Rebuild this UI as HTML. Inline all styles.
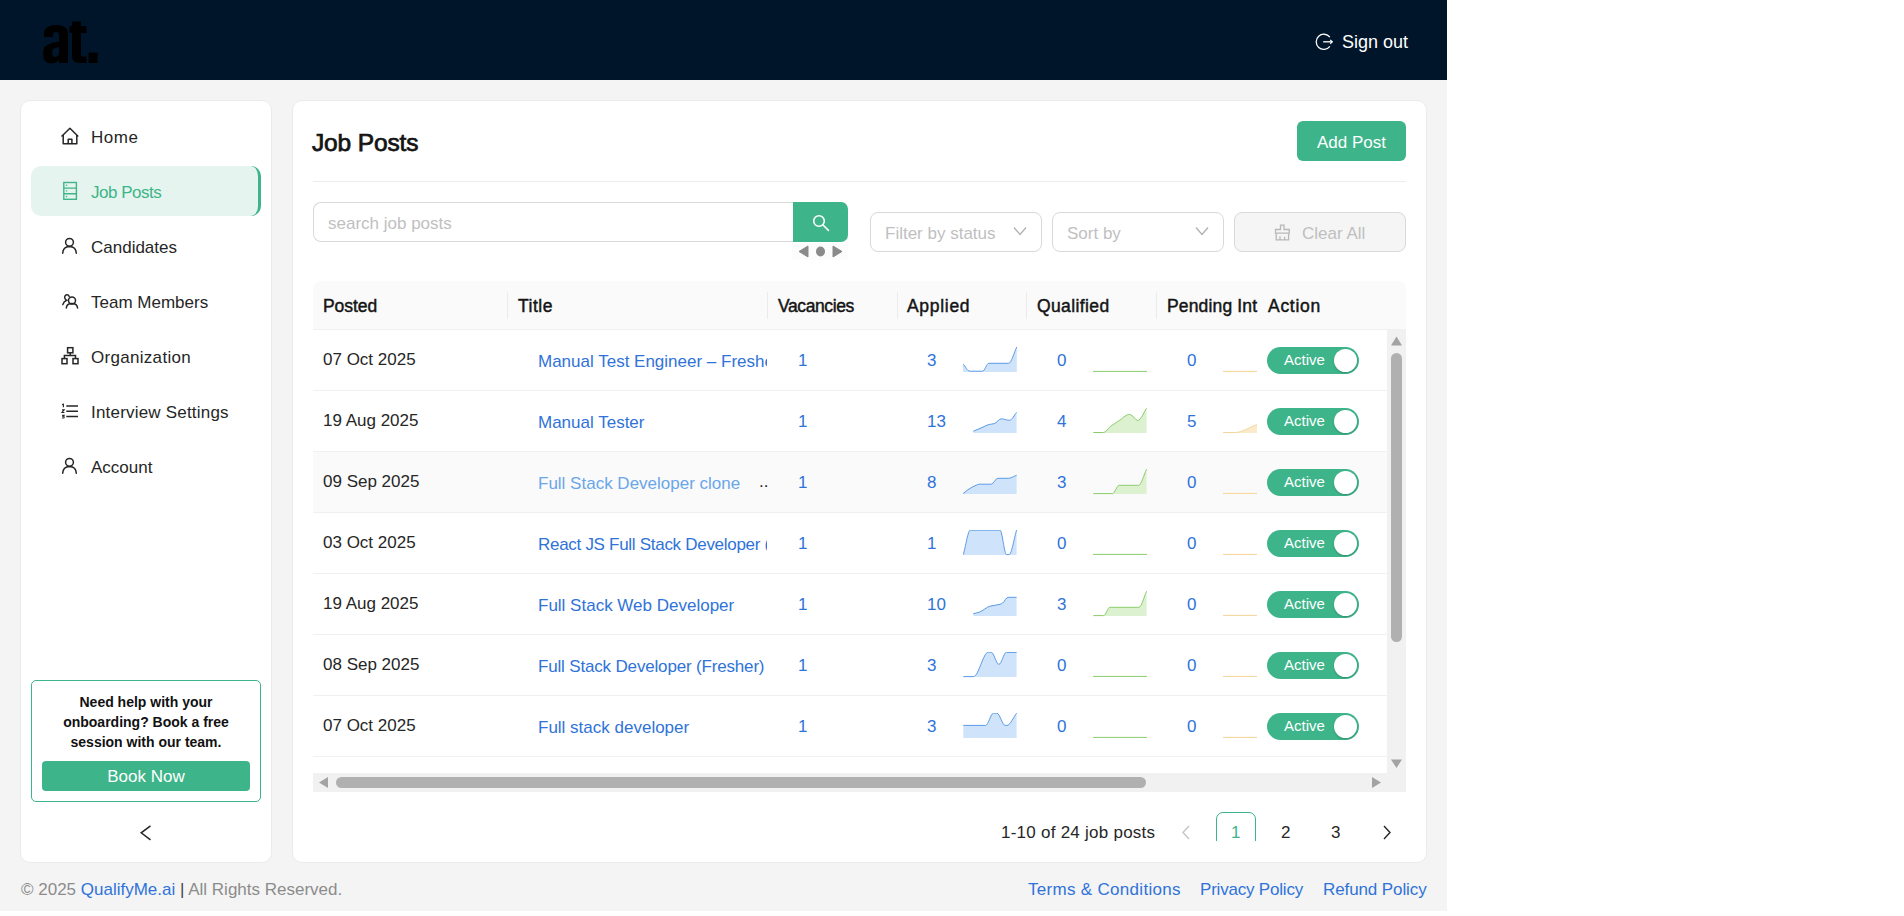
<!DOCTYPE html>
<html><head><meta charset="utf-8">
<style>
*{box-sizing:border-box;margin:0;padding:0}
html,body{width:1904px;height:916px;background:#fff;overflow:hidden;font-family:"Liberation Sans",sans-serif;color:#1f1f1f}
.abs{position:absolute}
#page{position:absolute;left:0;top:0;width:1447px;height:911px;background:#f4f4f4}
#hdr{position:absolute;left:0;top:0;width:1447px;height:80px;background:#001529}
.card{position:absolute;background:#fff;border:1px solid #ebebeb;border-radius:10px}
.nav{position:absolute;left:31px;width:230px;height:50px;font-size:17px;color:#262626}
.nav .ic{position:absolute;left:29px;top:16px;width:18px;height:18px}
.nav .tx{position:absolute;left:60px;top:2px;line-height:50px;white-space:nowrap}
.nav.on{background:#e6f4ef;border-radius:10px;color:#3db489;border-right:3px solid #3db489}
.green{background:#3db489}
.txt{position:absolute;white-space:nowrap}
.hd{top:295px;font-size:17.5px;line-height:22px;color:#141414;-webkit-text-stroke:0.45px #141414}
</style></head>
<body>
<div id="page"></div>
<div id="hdr">
  <svg class="abs" style="left:0;top:0" width="120" height="80" viewBox="0 0 120 80">
    <g fill="#000">
      <path d="M44 33 Q45 25 56 25 Q68 25 68 34 L68 63 L59 63 L59 60 Q56 63.5 51 63.5 Q43 63.5 43 53 Q43 45 52 43 L59 41.5 L59 35 Q59 32 56 32 Q53 32 53 35 L53 37 L44 37 Z M59 47 L54 48.5 Q52 49.5 52 53 Q52 57 55 57 Q59 57 59 52 Z"/>
      <path d="M72 21.5 L81 21.5 L81 26 L86.5 26 L86.5 33 L81 33 L81 55 Q81 56.5 83 56.5 L86.5 56.5 L86.5 63 L79 63 Q72 63 72 56 L72 33 L69.5 33 L69.5 26 L72 26 Z"/>
      <rect x="88.6" y="52.6" width="9" height="10.4"/>
    </g>
  </svg>
  <svg class="abs" style="left:1314px;top:33px" width="20" height="18" viewBox="0 0 20 18" fill="none" stroke="#fff" stroke-width="1.3"><path d="M15.85 4.2 A7.6 7.6 0 1 0 15.85 13.4"/><path d="M9.2 8.8 H18.2"/><path d="M16.2 6.9 L18.3 8.8 L16.2 10.7" stroke-width="1.2"/></svg>
  <div class="txt" style="left:1342px;top:29px;font-size:18px;color:#fff;line-height:26px">Sign out</div>
</div>

<!-- sidebar -->
<div class="card" style="left:20px;top:100px;width:252px;height:763px"></div>
<div id="side">
<div class="nav" style="top:111px"><svg class="abs" style="left:29px;top:15px" width="20" height="20" viewBox="0 0 20 20" fill="none" stroke="#262626" stroke-width="1.5" stroke-linejoin="round"><path d="M1.5 10.5 L9.9 2.3 L18.3 10.5"/><path d="M3.2 9 V17.8 H16.8 V9"/><path d="M8.2 17.8 V13.2 H11.9 V17.8"/></svg><div class="tx" style="letter-spacing:0.5px">Home</div></div>
<div class="nav on" style="top:166px"><svg class="abs" style="left:31px;top:15px" width="16" height="20" viewBox="0 0 16 20" fill="none" stroke="#3db489" stroke-width="1.4"><rect x="1.8" y="1.5" width="12.6" height="16.8"/><path d="M1.8 7.1 H14.4 M1.8 12.7 H14.4"/><path d="M4.5 4.3 h.1 M4.5 9.9 h.1 M4.5 15.5 h.1" stroke-width="1.4" stroke-linecap="round"/></svg><div class="tx" style="letter-spacing:-0.5px">Job Posts</div></div>
<div class="nav" style="top:221px"><svg class="abs" style="left:29px;top:15px" width="20" height="20" viewBox="0 0 20 20" fill="none" stroke="#262626" stroke-width="1.5" stroke-linecap="round"><circle cx="9.5" cy="6.3" r="3.9"/><path d="M2.7 17.3 Q3 10.8 9.5 10.6 Q16 10.8 16.3 17.3"/></svg><div class="tx">Candidates</div></div>
<div class="nav" style="top:276px"><svg class="abs" style="left:29px;top:15px" width="20" height="20" viewBox="0 0 20 20" fill="none" stroke="#262626" stroke-width="1.5" stroke-linecap="round"><circle cx="12" cy="9.4" r="3.5"/><path d="M6.3 17 Q6.6 12.6 12 12.5 Q17.2 12.6 17.6 17"/><path d="M9.2 5.6 Q8.5 3.6 6.8 3.8 Q4.3 4.2 4.8 7.1 Q5.2 8.6 6.6 9.2 Q3.6 10.4 2.8 13.6"/></svg><div class="tx">Team Members</div></div>
<div class="nav" style="top:331px"><svg class="abs" style="left:29px;top:15px" width="20" height="20" viewBox="0 0 20 20" fill="none" stroke="#262626" stroke-width="1.5"><rect x="7.6" y="1.7" width="5.3" height="5.1"/><path d="M10.2 6.8 V9.6 M4.4 12.6 V9.6 H15.5 V12.6"/><rect x="2" y="12.6" width="5" height="5.1"/><rect x="13" y="12.6" width="5" height="5.1"/></svg><div class="tx" style="letter-spacing:0.3px">Organization</div></div>
<div class="nav" style="top:386px"><svg class="abs" style="left:29px;top:15px" width="20" height="20" viewBox="0 0 20 20" fill="none" stroke="#262626"><path d="M6.3 5 H18 M6.3 10.3 H18 M6.3 15.5 H18" stroke-width="1.5"/><path d="M2 3.6 L3.4 3.2 V6.2 M2 8.9 H4.2 L2 11.5 H4.4 M2 14.2 H4.1 L3 15.3 Q4.4 15.5 4.2 16.4 Q3.8 17.2 2 16.8" stroke-width="1.1"/></svg><div class="tx" style="letter-spacing:0.2px">Interview Settings</div></div>
<div class="nav" style="top:441px"><svg class="abs" style="left:29px;top:15px" width="20" height="20" viewBox="0 0 20 20" fill="none" stroke="#262626" stroke-width="1.5" stroke-linecap="round"><circle cx="9.5" cy="6.3" r="3.9"/><path d="M2.7 17.3 Q3 10.8 9.5 10.6 Q16 10.8 16.3 17.3"/></svg><div class="tx">Account</div></div>

<div class="abs" style="left:31px;top:680px;width:230px;height:122px;border:1px solid #3db489;border-radius:5px;background:#fff"></div>
<div class="txt" style="left:31px;top:692px;width:230px;text-align:center;font-size:14px;font-weight:bold;line-height:20px;color:#111;white-space:normal">Need help with your<br>onboarding? Book a free<br>session with our team.</div>
<div class="abs green" style="left:42px;top:761px;width:208px;height:30px;border-radius:4px;color:#fff;font-size:17px;line-height:32px;text-align:center;overflow:hidden">Book Now</div>
<svg class="abs" style="left:138px;top:823px" width="16" height="20" viewBox="0 0 16 20" fill="none" stroke="#262626" stroke-width="1.5"><path d="M12.5 2.8 L3.2 9.8 L12.5 16.8"/></svg>
</div>

<!-- main card -->
<div class="card" style="left:292px;top:100px;width:1135px;height:763px"></div>
<!--MAIN--><div class="txt" style="left:312px;top:127px;font-size:24.5px;line-height:32px;color:#141414;-webkit-text-stroke:0.75px #141414;letter-spacing:-0.15px">Job Posts</div>
<div class="abs green" style="left:1297px;top:121px;width:109px;height:40px;border-radius:6px;color:#fff;font-size:17px;line-height:44px;text-align:center">Add Post</div>
<div class="abs" style="left:313px;top:181px;width:1093px;height:1px;background:#ececec"></div>
<div class="abs" style="left:313px;top:202px;width:482px;height:40px;border:1px solid #d9d9d9;border-right:none;border-radius:8px 0 0 8px;background:#fff"></div>
<div class="txt" style="left:328px;top:213px;font-size:17px;line-height:22px;color:#bfbfbf">search job posts</div>
<div class="abs green" style="left:793px;top:202px;width:55px;height:40px;border-radius:0 7px 7px 0"></div>
<svg class="abs" style="left:810px;top:212px" width="22" height="22" viewBox="0 0 22 22" fill="none" stroke="#fff" stroke-width="1.6"><circle cx="9" cy="9" r="5.3"/><path d="M12.8 12.8 L18.4 18.4" stroke-linecap="round"/></svg>
<div class="abs" style="left:792px;top:243px;width:56px;height:17px;background:#fcfcfc"></div>
<svg class="abs" style="left:796px;top:243px" width="50" height="17" viewBox="0 0 50 17" fill="#8a8a8a"><path d="M3 8.5 L12 3 V14 Z" stroke="#8a8a8a" stroke-width="1" stroke-linejoin="round"/><ellipse cx="24.5" cy="8.5" rx="4.5" ry="5"/><path d="M37 3 L46 8.5 L37 14 Z" stroke="#8a8a8a" stroke-width="1" stroke-linejoin="round"/></svg>
<div class="abs" style="left:870px;top:212px;width:172px;height:40px;border:1px solid #d9d9d9;border-radius:8px;background:#fff"></div>
<div class="txt" style="left:885px;top:223px;font-size:17px;line-height:22px;color:#bfbfbf">Filter by status</div>
<svg class="abs" style="left:1013px;top:226px" width="14" height="10" viewBox="0 0 14 10" fill="none" stroke="#b0b0b0" stroke-width="1.3"><path d="M1 1.5 L7 8.5 L13 1.5"/></svg>
<div class="abs" style="left:1052px;top:212px;width:172px;height:40px;border:1px solid #d9d9d9;border-radius:8px;background:#fff"></div>
<div class="txt" style="left:1067px;top:223px;font-size:17px;line-height:22px;color:#bfbfbf">Sort by</div>
<svg class="abs" style="left:1195px;top:226px" width="14" height="10" viewBox="0 0 14 10" fill="none" stroke="#b0b0b0" stroke-width="1.3"><path d="M1 1.5 L7 8.5 L13 1.5"/></svg>
<div class="abs" style="left:1234px;top:212px;width:172px;height:40px;border:1px solid #d9d9d9;border-radius:8px;background:#f5f5f5"></div>
<svg class="abs" style="left:1274px;top:224px" width="17" height="17" viewBox="0 0 17 17" fill="none" stroke="#b8b8b8" stroke-width="1.3"><path d="M6.5 1.2 H10 V5.5 H15.3 V9.2 H1.5 V5.5 H6.5 Z"/><path d="M2.2 9.2 V15.8 H14.6 V9.2 M6 15.8 V12.3 M10.6 15.8 V12.8"/></svg>
<div class="txt" style="left:1302px;top:223px;font-size:17px;line-height:22px;color:#bfbfbf">Clear All</div>
<div class="abs" style="left:313px;top:281px;width:1093px;height:49px;background:#fafafa;border-radius:8px 8px 0 0;border-bottom:1px solid #f0f0f0"></div>
<div class="txt hd" style="left:323px;letter-spacing:-0.05px">Posted</div>
<div class="txt hd" style="left:518px;letter-spacing:0.5px">Title</div>
<div class="txt hd" style="left:778px;letter-spacing:-0.4px">Vacancies</div>
<div class="txt hd" style="left:907px;letter-spacing:0.7px">Applied</div>
<div class="txt hd" style="left:1037px;letter-spacing:0.38px">Qualified</div>
<div class="txt hd" style="left:1268px;letter-spacing:0.72px">Action</div>
<div class="abs" style="left:1167px;top:290px;width:91px;height:30px;overflow:hidden"><div class="txt hd" style="left:0;top:5px;letter-spacing:0.15px">Pending Int</div></div>
<div class="abs" style="left:507px;top:292px;width:1px;height:27px;background:#ebebeb"></div>
<div class="abs" style="left:767px;top:292px;width:1px;height:27px;background:#ebebeb"></div>
<div class="abs" style="left:897px;top:292px;width:1px;height:27px;background:#ebebeb"></div>
<div class="abs" style="left:1026px;top:292px;width:1px;height:27px;background:#ebebeb"></div>
<div class="abs" style="left:1156px;top:292px;width:1px;height:27px;background:#ebebeb"></div>
<div class="abs" style="left:313px;top:330px;width:1074px;height:443px;overflow:hidden">
<div class="abs" style="left:0;top:0px;width:1074px;height:60px;background:#fff"></div>
<div class="abs" style="left:0;top:60px;width:1074px;height:1px;background:#f0f0f0"></div>
<div class="txt" style="left:10px;top:19px;font-size:17px;line-height:22px;color:#262626">07 Oct 2025</div>
<div class="abs" style="left:225px;top:19px;width:229px;height:26px;overflow:hidden"><div class="txt" style="left:0;top:2px;font-size:17px;line-height:22px;color:#2f73d9;letter-spacing:0px">Manual Test Engineer – Fresher</div></div>
<div class="txt" style="left:485px;top:20px;font-size:17px;line-height:22px;color:#2f73d9">1</div>
<div class="txt" style="left:614px;top:20px;font-size:17px;line-height:22px;color:#2f73d9">3</div>
<div class="txt" style="left:744px;top:20px;font-size:17px;line-height:22px;color:#2f73d9">0</div>
<div class="txt" style="left:874px;top:20px;font-size:17px;line-height:22px;color:#2f73d9">0</div>
<svg class="abs" style="left:650px;top:17px;overflow:hidden" width="55" height="26" viewBox="0 0 55 26"><path d="M0.00 16.70 C2.23 19.20 4.47 24.20 6.70 24.20 C11.00 24.20 15.30 24.20 19.60 24.20 C21.67 24.20 23.73 16.30 25.80 16.30 C32.40 16.30 39.00 16.30 45.60 16.30 C48.33 16.30 51.07 5.43 53.80 0.00 L53.8 25 L0.0 25 Z" fill="#cfe3fa" stroke="none"/><path d="M0.00 16.70 C2.23 19.20 4.47 24.20 6.70 24.20 C11.00 24.20 15.30 24.20 19.60 24.20 C21.67 24.20 23.73 16.30 25.80 16.30 C32.40 16.30 39.00 16.30 45.60 16.30 C48.33 16.30 51.07 5.43 53.80 0.00" fill="none" stroke="#5a9be6" stroke-width="1"/></svg>
<svg class="abs" style="left:780px;top:17px;overflow:hidden" width="55" height="26" viewBox="0 0 55 26"><path d="M0.00 24.40 L54.00 24.40 L54.0 25 L0.0 25 Z" fill="#dcf1d0" stroke="none"/><path d="M0.00 24.40 L54.00 24.40" fill="none" stroke="#8ccc6c" stroke-width="1"/></svg>
<svg class="abs" style="left:910px;top:17px;overflow:hidden" width="34" height="26" viewBox="0 0 34 26"><path d="M0.00 24.40 L54.00 24.40 L54.0 25 L0.0 25 Z" fill="#fcebcb" stroke="none"/><path d="M0.00 24.40 L54.00 24.40" fill="none" stroke="#f5d699" stroke-width="1"/></svg>
<div class="abs green" style="left:954px;top:17px;width:92px;height:27px;border-radius:14px"></div>
<div class="txt" style="left:971px;top:20px;font-size:15px;line-height:20px;color:#fff">Active</div>
<div class="abs" style="left:1021px;top:19px;width:23px;height:23px;border-radius:50%;background:#fff;box-shadow:0 1px 2px rgba(0,0,0,.2)"></div>
<div class="abs" style="left:0;top:61px;width:1074px;height:60px;background:#fff"></div>
<div class="abs" style="left:0;top:121px;width:1074px;height:1px;background:#f0f0f0"></div>
<div class="txt" style="left:10px;top:80px;font-size:17px;line-height:22px;color:#262626">19 Aug 2025</div>
<div class="abs" style="left:225px;top:80px;width:229px;height:26px;overflow:hidden"><div class="txt" style="left:0;top:2px;font-size:17px;line-height:22px;color:#2f73d9;letter-spacing:0px">Manual Tester</div></div>
<div class="txt" style="left:485px;top:81px;font-size:17px;line-height:22px;color:#2f73d9">1</div>
<div class="txt" style="left:614px;top:81px;font-size:17px;line-height:22px;color:#2f73d9">13</div>
<div class="txt" style="left:744px;top:81px;font-size:17px;line-height:22px;color:#2f73d9">4</div>
<div class="txt" style="left:874px;top:81px;font-size:17px;line-height:22px;color:#2f73d9">5</div>
<svg class="abs" style="left:650px;top:78px;overflow:hidden" width="55" height="26" viewBox="0 0 55 26"><path d="M10.30 23.20 C12.87 22.13 15.43 21.09 18.00 20.00 C20.70 18.86 23.40 17.15 26.10 16.50 C27.83 16.08 29.57 16.07 31.30 15.60 C33.63 14.97 35.97 10.80 38.30 10.80 C41.07 10.80 43.83 12.30 46.60 12.30 C48.93 12.30 51.27 7.03 53.60 4.40 L53.6 25 L10.3 25 Z" fill="#cfe3fa" stroke="none"/><path d="M10.30 23.20 C12.87 22.13 15.43 21.09 18.00 20.00 C20.70 18.86 23.40 17.15 26.10 16.50 C27.83 16.08 29.57 16.07 31.30 15.60 C33.63 14.97 35.97 10.80 38.30 10.80 C41.07 10.80 43.83 12.30 46.60 12.30 C48.93 12.30 51.27 7.03 53.60 4.40" fill="none" stroke="#5a9be6" stroke-width="1"/></svg>
<svg class="abs" style="left:780px;top:78px;overflow:hidden" width="55" height="26" viewBox="0 0 55 26"><path d="M0.30 24.50 C3.73 24.50 7.17 24.50 10.60 24.50 C12.83 24.50 15.07 20.33 17.30 18.60 C20.93 15.79 24.57 13.84 28.20 11.20 C29.80 10.04 31.40 8.33 33.00 7.50 C33.90 7.03 34.80 6.40 35.70 6.40 C36.43 6.40 37.17 6.60 37.90 6.80 C40.20 7.42 42.50 12.50 44.80 12.50 C47.73 12.50 50.67 4.37 53.60 0.30 L53.6 25 L0.3 25 Z" fill="#dcf1d0" stroke="none"/><path d="M0.30 24.50 C3.73 24.50 7.17 24.50 10.60 24.50 C12.83 24.50 15.07 20.33 17.30 18.60 C20.93 15.79 24.57 13.84 28.20 11.20 C29.80 10.04 31.40 8.33 33.00 7.50 C33.90 7.03 34.80 6.40 35.70 6.40 C36.43 6.40 37.17 6.60 37.90 6.80 C40.20 7.42 42.50 12.50 44.80 12.50 C47.73 12.50 50.67 4.37 53.60 0.30" fill="none" stroke="#8ccc6c" stroke-width="1"/></svg>
<svg class="abs" style="left:910px;top:78px;overflow:hidden" width="34" height="26" viewBox="0 0 34 26"><path d="M0.10 24.50 C4.10 24.50 8.10 24.50 12.10 24.50 C19.40 24.50 26.70 19.17 34.00 16.50 C40.67 14.07 47.33 11.63 54.00 9.20 L54.0 25 L0.1 25 Z" fill="#fcebcb" stroke="none"/><path d="M0.10 24.50 C4.10 24.50 8.10 24.50 12.10 24.50 C19.40 24.50 26.70 19.17 34.00 16.50 C40.67 14.07 47.33 11.63 54.00 9.20" fill="none" stroke="#f5d699" stroke-width="1"/></svg>
<div class="abs green" style="left:954px;top:78px;width:92px;height:27px;border-radius:14px"></div>
<div class="txt" style="left:971px;top:81px;font-size:15px;line-height:20px;color:#fff">Active</div>
<div class="abs" style="left:1021px;top:80px;width:23px;height:23px;border-radius:50%;background:#fff;box-shadow:0 1px 2px rgba(0,0,0,.2)"></div>
<div class="abs" style="left:0;top:122px;width:1074px;height:60px;background:#fafafa"></div>
<div class="abs" style="left:0;top:182px;width:1074px;height:1px;background:#f0f0f0"></div>
<div class="txt" style="left:10px;top:141px;font-size:17px;line-height:22px;color:#262626">09 Sep 2025</div>
<div class="abs" style="left:225px;top:141px;width:229px;height:26px;overflow:hidden"><div class="txt" style="left:0;top:2px;font-size:17px;line-height:22px;color:#6aa6ea;letter-spacing:0px">Full Stack Developer clone</div></div>
<div class="txt" style="left:446px;top:141px;font-size:17px;line-height:22px;color:#262626">..</div>
<div class="txt" style="left:485px;top:142px;font-size:17px;line-height:22px;color:#2f73d9">1</div>
<div class="txt" style="left:614px;top:142px;font-size:17px;line-height:22px;color:#2f73d9">8</div>
<div class="txt" style="left:744px;top:142px;font-size:17px;line-height:22px;color:#2f73d9">3</div>
<div class="txt" style="left:874px;top:142px;font-size:17px;line-height:22px;color:#2f73d9">0</div>
<svg class="abs" style="left:650px;top:139px;overflow:hidden" width="55" height="26" viewBox="0 0 55 26"><path d="M0.10 24.60 C2.07 23.07 4.03 21.25 6.00 20.00 C8.33 18.52 10.67 17.19 13.00 16.30 C14.17 15.85 15.33 15.20 16.50 15.20 C20.40 15.20 24.30 15.20 28.20 15.20 C30.40 15.20 32.60 9.30 34.80 9.30 C38.30 9.30 41.80 9.30 45.30 9.30 C48.07 9.30 50.83 7.30 53.60 6.30 L53.6 25 L0.1 25 Z" fill="#cfe3fa" stroke="none"/><path d="M0.10 24.60 C2.07 23.07 4.03 21.25 6.00 20.00 C8.33 18.52 10.67 17.19 13.00 16.30 C14.17 15.85 15.33 15.20 16.50 15.20 C20.40 15.20 24.30 15.20 28.20 15.20 C30.40 15.20 32.60 9.30 34.80 9.30 C38.30 9.30 41.80 9.30 45.30 9.30 C48.07 9.30 50.83 7.30 53.60 6.30" fill="none" stroke="#5a9be6" stroke-width="1"/></svg>
<svg class="abs" style="left:780px;top:139px;overflow:hidden" width="55" height="26" viewBox="0 0 55 26"><path d="M0.30 24.60 C6.70 24.60 13.10 24.60 19.50 24.60 C21.70 24.60 23.90 16.30 26.10 16.30 C32.57 16.30 39.03 16.30 45.50 16.30 C48.20 16.30 50.90 5.57 53.60 0.20 L53.6 25 L0.3 25 Z" fill="#dcf1d0" stroke="none"/><path d="M0.30 24.60 C6.70 24.60 13.10 24.60 19.50 24.60 C21.70 24.60 23.90 16.30 26.10 16.30 C32.57 16.30 39.03 16.30 45.50 16.30 C48.20 16.30 50.90 5.57 53.60 0.20" fill="none" stroke="#8ccc6c" stroke-width="1"/></svg>
<svg class="abs" style="left:910px;top:139px;overflow:hidden" width="34" height="26" viewBox="0 0 34 26"><path d="M0.00 24.40 L54.00 24.40 L54.0 25 L0.0 25 Z" fill="#fcebcb" stroke="none"/><path d="M0.00 24.40 L54.00 24.40" fill="none" stroke="#f5d699" stroke-width="1"/></svg>
<div class="abs green" style="left:954px;top:139px;width:92px;height:27px;border-radius:14px"></div>
<div class="txt" style="left:971px;top:142px;font-size:15px;line-height:20px;color:#fff">Active</div>
<div class="abs" style="left:1021px;top:141px;width:23px;height:23px;border-radius:50%;background:#fff;box-shadow:0 1px 2px rgba(0,0,0,.2)"></div>
<div class="abs" style="left:0;top:183px;width:1074px;height:60px;background:#fff"></div>
<div class="abs" style="left:0;top:243px;width:1074px;height:1px;background:#f0f0f0"></div>
<div class="txt" style="left:10px;top:202px;font-size:17px;line-height:22px;color:#262626">03 Oct 2025</div>
<div class="abs" style="left:225px;top:202px;width:229px;height:26px;overflow:hidden"><div class="txt" style="left:0;top:2px;font-size:17px;line-height:22px;color:#2f73d9;letter-spacing:-0.29px">React JS Full Stack Developer (MERN)</div></div>
<div class="txt" style="left:485px;top:203px;font-size:17px;line-height:22px;color:#2f73d9">1</div>
<div class="txt" style="left:614px;top:203px;font-size:17px;line-height:22px;color:#2f73d9">1</div>
<div class="txt" style="left:744px;top:203px;font-size:17px;line-height:22px;color:#2f73d9">0</div>
<div class="txt" style="left:874px;top:203px;font-size:17px;line-height:22px;color:#2f73d9">0</div>
<svg class="abs" style="left:650px;top:200px;overflow:hidden" width="55" height="26" viewBox="0 0 55 26"><path d="M0.30 24.60 C2.63 16.47 4.97 0.20 7.30 0.20 C17.20 0.20 27.10 0.20 37.00 0.20 C39.17 0.20 41.33 24.60 43.50 24.60 C44.37 24.60 45.23 24.60 46.10 24.60 C48.60 24.60 51.10 8.20 53.60 0.00 L53.6 25 L0.3 25 Z" fill="#cfe3fa" stroke="none"/><path d="M0.30 24.60 C2.63 16.47 4.97 0.20 7.30 0.20 C17.20 0.20 27.10 0.20 37.00 0.20 C39.17 0.20 41.33 24.60 43.50 24.60 C44.37 24.60 45.23 24.60 46.10 24.60 C48.60 24.60 51.10 8.20 53.60 0.00" fill="none" stroke="#5a9be6" stroke-width="1"/></svg>
<svg class="abs" style="left:780px;top:200px;overflow:hidden" width="55" height="26" viewBox="0 0 55 26"><path d="M0.00 24.40 L54.00 24.40 L54.0 25 L0.0 25 Z" fill="#dcf1d0" stroke="none"/><path d="M0.00 24.40 L54.00 24.40" fill="none" stroke="#8ccc6c" stroke-width="1"/></svg>
<svg class="abs" style="left:910px;top:200px;overflow:hidden" width="34" height="26" viewBox="0 0 34 26"><path d="M0.00 24.40 L54.00 24.40 L54.0 25 L0.0 25 Z" fill="#fcebcb" stroke="none"/><path d="M0.00 24.40 L54.00 24.40" fill="none" stroke="#f5d699" stroke-width="1"/></svg>
<div class="abs green" style="left:954px;top:200px;width:92px;height:27px;border-radius:14px"></div>
<div class="txt" style="left:971px;top:203px;font-size:15px;line-height:20px;color:#fff">Active</div>
<div class="abs" style="left:1021px;top:202px;width:23px;height:23px;border-radius:50%;background:#fff;box-shadow:0 1px 2px rgba(0,0,0,.2)"></div>
<div class="abs" style="left:0;top:244px;width:1074px;height:60px;background:#fff"></div>
<div class="abs" style="left:0;top:304px;width:1074px;height:1px;background:#f0f0f0"></div>
<div class="txt" style="left:10px;top:263px;font-size:17px;line-height:22px;color:#262626">19 Aug 2025</div>
<div class="abs" style="left:225px;top:263px;width:229px;height:26px;overflow:hidden"><div class="txt" style="left:0;top:2px;font-size:17px;line-height:22px;color:#2f73d9;letter-spacing:0px">Full Stack Web Developer</div></div>
<div class="txt" style="left:485px;top:264px;font-size:17px;line-height:22px;color:#2f73d9">1</div>
<div class="txt" style="left:614px;top:264px;font-size:17px;line-height:22px;color:#2f73d9">10</div>
<div class="txt" style="left:744px;top:264px;font-size:17px;line-height:22px;color:#2f73d9">3</div>
<div class="txt" style="left:874px;top:264px;font-size:17px;line-height:22px;color:#2f73d9">0</div>
<svg class="abs" style="left:650px;top:261px;overflow:hidden" width="55" height="26" viewBox="0 0 55 26"><path d="M10.30 22.70 C12.37 22.17 14.43 21.81 16.50 21.10 C19.97 19.91 23.43 16.18 26.90 15.20 C30.27 14.25 33.63 14.31 37.00 13.30 C37.87 13.04 38.73 12.56 39.60 12.00 C41.40 10.83 43.20 6.30 45.00 6.30 C47.87 6.30 50.73 6.30 53.60 6.30 L53.6 25 L10.3 25 Z" fill="#cfe3fa" stroke="none"/><path d="M10.30 22.70 C12.37 22.17 14.43 21.81 16.50 21.10 C19.97 19.91 23.43 16.18 26.90 15.20 C30.27 14.25 33.63 14.31 37.00 13.30 C37.87 13.04 38.73 12.56 39.60 12.00 C41.40 10.83 43.20 6.30 45.00 6.30 C47.87 6.30 50.73 6.30 53.60 6.30" fill="none" stroke="#5a9be6" stroke-width="1"/></svg>
<svg class="abs" style="left:780px;top:261px;overflow:hidden" width="55" height="26" viewBox="0 0 55 26"><path d="M0.30 24.60 C3.73 24.60 7.17 24.60 10.60 24.60 C12.70 24.60 14.80 16.30 16.90 16.30 C26.57 16.30 36.23 16.30 45.90 16.30 C48.47 16.30 51.03 5.57 53.60 0.20 L53.6 25 L0.3 25 Z" fill="#dcf1d0" stroke="none"/><path d="M0.30 24.60 C3.73 24.60 7.17 24.60 10.60 24.60 C12.70 24.60 14.80 16.30 16.90 16.30 C26.57 16.30 36.23 16.30 45.90 16.30 C48.47 16.30 51.03 5.57 53.60 0.20" fill="none" stroke="#8ccc6c" stroke-width="1"/></svg>
<svg class="abs" style="left:910px;top:261px;overflow:hidden" width="34" height="26" viewBox="0 0 34 26"><path d="M0.00 24.40 L54.00 24.40 L54.0 25 L0.0 25 Z" fill="#fcebcb" stroke="none"/><path d="M0.00 24.40 L54.00 24.40" fill="none" stroke="#f5d699" stroke-width="1"/></svg>
<div class="abs green" style="left:954px;top:261px;width:92px;height:27px;border-radius:14px"></div>
<div class="txt" style="left:971px;top:264px;font-size:15px;line-height:20px;color:#fff">Active</div>
<div class="abs" style="left:1021px;top:263px;width:23px;height:23px;border-radius:50%;background:#fff;box-shadow:0 1px 2px rgba(0,0,0,.2)"></div>
<div class="abs" style="left:0;top:305px;width:1074px;height:60px;background:#fff"></div>
<div class="abs" style="left:0;top:365px;width:1074px;height:1px;background:#f0f0f0"></div>
<div class="txt" style="left:10px;top:324px;font-size:17px;line-height:22px;color:#262626">08 Sep 2025</div>
<div class="abs" style="left:225px;top:324px;width:229px;height:26px;overflow:hidden"><div class="txt" style="left:0;top:2px;font-size:17px;line-height:22px;color:#2f73d9;letter-spacing:-0.17px">Full Stack Developer (Fresher)</div></div>
<div class="txt" style="left:485px;top:325px;font-size:17px;line-height:22px;color:#2f73d9">1</div>
<div class="txt" style="left:614px;top:325px;font-size:17px;line-height:22px;color:#2f73d9">3</div>
<div class="txt" style="left:744px;top:325px;font-size:17px;line-height:22px;color:#2f73d9">0</div>
<div class="txt" style="left:874px;top:325px;font-size:17px;line-height:22px;color:#2f73d9">0</div>
<svg class="abs" style="left:650px;top:322px;overflow:hidden" width="55" height="26" viewBox="0 0 55 26"><path d="M0.30 24.60 C3.73 24.60 7.17 24.60 10.60 24.60 C15.47 24.60 20.33 0.20 25.20 0.20 C26.20 0.20 27.20 0.20 28.20 0.20 C30.77 0.20 33.33 12.40 35.90 12.40 C38.37 12.40 40.83 0.40 43.30 0.40 C46.73 0.40 50.17 0.40 53.60 0.40 L53.6 25 L0.3 25 Z" fill="#cfe3fa" stroke="none"/><path d="M0.30 24.60 C3.73 24.60 7.17 24.60 10.60 24.60 C15.47 24.60 20.33 0.20 25.20 0.20 C26.20 0.20 27.20 0.20 28.20 0.20 C30.77 0.20 33.33 12.40 35.90 12.40 C38.37 12.40 40.83 0.40 43.30 0.40 C46.73 0.40 50.17 0.40 53.60 0.40" fill="none" stroke="#5a9be6" stroke-width="1"/></svg>
<svg class="abs" style="left:780px;top:322px;overflow:hidden" width="55" height="26" viewBox="0 0 55 26"><path d="M0.00 24.40 L54.00 24.40 L54.0 25 L0.0 25 Z" fill="#dcf1d0" stroke="none"/><path d="M0.00 24.40 L54.00 24.40" fill="none" stroke="#8ccc6c" stroke-width="1"/></svg>
<svg class="abs" style="left:910px;top:322px;overflow:hidden" width="34" height="26" viewBox="0 0 34 26"><path d="M0.00 24.40 L54.00 24.40 L54.0 25 L0.0 25 Z" fill="#fcebcb" stroke="none"/><path d="M0.00 24.40 L54.00 24.40" fill="none" stroke="#f5d699" stroke-width="1"/></svg>
<div class="abs green" style="left:954px;top:322px;width:92px;height:27px;border-radius:14px"></div>
<div class="txt" style="left:971px;top:325px;font-size:15px;line-height:20px;color:#fff">Active</div>
<div class="abs" style="left:1021px;top:324px;width:23px;height:23px;border-radius:50%;background:#fff;box-shadow:0 1px 2px rgba(0,0,0,.2)"></div>
<div class="abs" style="left:0;top:366px;width:1074px;height:60px;background:#fff"></div>
<div class="abs" style="left:0;top:426px;width:1074px;height:1px;background:#f0f0f0"></div>
<div class="txt" style="left:10px;top:385px;font-size:17px;line-height:22px;color:#262626">07 Oct 2025</div>
<div class="abs" style="left:225px;top:385px;width:229px;height:26px;overflow:hidden"><div class="txt" style="left:0;top:2px;font-size:17px;line-height:22px;color:#2f73d9;letter-spacing:0px">Full stack developer</div></div>
<div class="txt" style="left:485px;top:386px;font-size:17px;line-height:22px;color:#2f73d9">1</div>
<div class="txt" style="left:614px;top:386px;font-size:17px;line-height:22px;color:#2f73d9">3</div>
<div class="txt" style="left:744px;top:386px;font-size:17px;line-height:22px;color:#2f73d9">0</div>
<div class="txt" style="left:874px;top:386px;font-size:17px;line-height:22px;color:#2f73d9">0</div>
<svg class="abs" style="left:650px;top:383px;overflow:hidden" width="55" height="26" viewBox="0 0 55 26"><path d="M0.30 12.40 C7.73 12.40 15.17 12.40 22.60 12.40 C25.20 12.40 27.80 0.20 30.40 0.20 C31.57 0.20 32.73 0.20 33.90 0.20 C36.67 0.20 39.43 12.40 42.20 12.40 C42.80 12.40 43.40 12.40 44.00 12.40 C47.20 12.40 50.40 4.27 53.60 0.20 L53.6 25 L0.3 25 Z" fill="#cfe3fa" stroke="none"/><path d="M0.30 12.40 C7.73 12.40 15.17 12.40 22.60 12.40 C25.20 12.40 27.80 0.20 30.40 0.20 C31.57 0.20 32.73 0.20 33.90 0.20 C36.67 0.20 39.43 12.40 42.20 12.40 C42.80 12.40 43.40 12.40 44.00 12.40 C47.20 12.40 50.40 4.27 53.60 0.20" fill="none" stroke="#5a9be6" stroke-width="1"/></svg>
<svg class="abs" style="left:780px;top:383px;overflow:hidden" width="55" height="26" viewBox="0 0 55 26"><path d="M0.00 24.40 L54.00 24.40 L54.0 25 L0.0 25 Z" fill="#dcf1d0" stroke="none"/><path d="M0.00 24.40 L54.00 24.40" fill="none" stroke="#8ccc6c" stroke-width="1"/></svg>
<svg class="abs" style="left:910px;top:383px;overflow:hidden" width="34" height="26" viewBox="0 0 34 26"><path d="M0.00 24.40 L54.00 24.40 L54.0 25 L0.0 25 Z" fill="#fcebcb" stroke="none"/><path d="M0.00 24.40 L54.00 24.40" fill="none" stroke="#f5d699" stroke-width="1"/></svg>
<div class="abs green" style="left:954px;top:383px;width:92px;height:27px;border-radius:14px"></div>
<div class="txt" style="left:971px;top:386px;font-size:15px;line-height:20px;color:#fff">Active</div>
<div class="abs" style="left:1021px;top:385px;width:23px;height:23px;border-radius:50%;background:#fff;box-shadow:0 1px 2px rgba(0,0,0,.2)"></div>
</div>
<div class="abs" style="left:1387px;top:330px;width:19px;height:443px;background:#f1f1f1"></div>
<svg class="abs" style="left:1387px;top:330px" width="19" height="443" viewBox="0 0 19 443" fill="#a3a3a3"><path d="M4 15.5 L9.5 6.5 L15 15.5 Z"/><path d="M4 429.5 L9.5 438 L15 429.5 Z"/></svg>
<div class="abs" style="left:1391px;top:353px;width:11px;height:289px;border-radius:6px;background:#b0b0b0"></div>
<div class="abs" style="left:313px;top:773px;width:1093px;height:19px;background:#f1f1f1"></div>
<svg class="abs" style="left:313px;top:773px" width="1074" height="19" viewBox="0 0 1074 19" fill="#a3a3a3"><path d="M15 4 L6 9.5 L15 15 Z"/><path d="M1059 4 L1068 9.5 L1059 15 Z"/></svg>
<div class="abs" style="left:336px;top:777px;width:810px;height:11px;border-radius:6px;background:#b0b0b0"></div>
<div class="txt" style="left:1001px;top:822px;font-size:17px;letter-spacing:0.25px;line-height:22px;color:#262626">1-10 of 24 job posts</div>
<svg class="abs" style="left:1178px;top:824px" width="16" height="17" viewBox="0 0 16 17" fill="none" stroke="#c4c4c4" stroke-width="1.4"><path d="M11 2 L5 8.5 L11 15"/></svg>
<div class="abs" style="left:1216px;top:812px;width:40px;height:29px;overflow:hidden"><div class="abs" style="left:0;top:0;width:40px;height:40px;border:1px solid #3db489;border-radius:7px"></div></div>
<div class="txt" style="left:1231px;top:822px;font-size:17px;line-height:22px;color:#3db489">1</div>
<div class="txt" style="left:1281px;top:822px;font-size:17px;line-height:22px;color:#262626">2</div>
<div class="txt" style="left:1331px;top:822px;font-size:17px;line-height:22px;color:#262626">3</div>
<svg class="abs" style="left:1379px;top:824px" width="16" height="17" viewBox="0 0 16 17" fill="none" stroke="#262626" stroke-width="1.4"><path d="M5 2 L11 8.5 L5 15"/></svg><!--/MAIN-->

<!-- footer -->
<div class="txt" style="left:21px;top:879px;font-size:17px;line-height:22px;color:#8c8c8c">© 2025 <span style="color:#2f73d9">QualifyMe.ai</span> <span style="color:#444">|</span> All Rights Reserved.</div>
<div class="txt" style="left:1028px;top:879px;font-size:17px;letter-spacing:0.3px;line-height:22px;color:#2f73d9">Terms &amp; Conditions</div>
<div class="txt" style="left:1200px;top:879px;font-size:17px;letter-spacing:-0.2px;line-height:22px;color:#2f73d9">Privacy Policy</div>
<div class="txt" style="left:1323px;top:879px;font-size:17px;letter-spacing:-0.1px;line-height:22px;color:#2f73d9">Refund Policy</div>
</body></html>
